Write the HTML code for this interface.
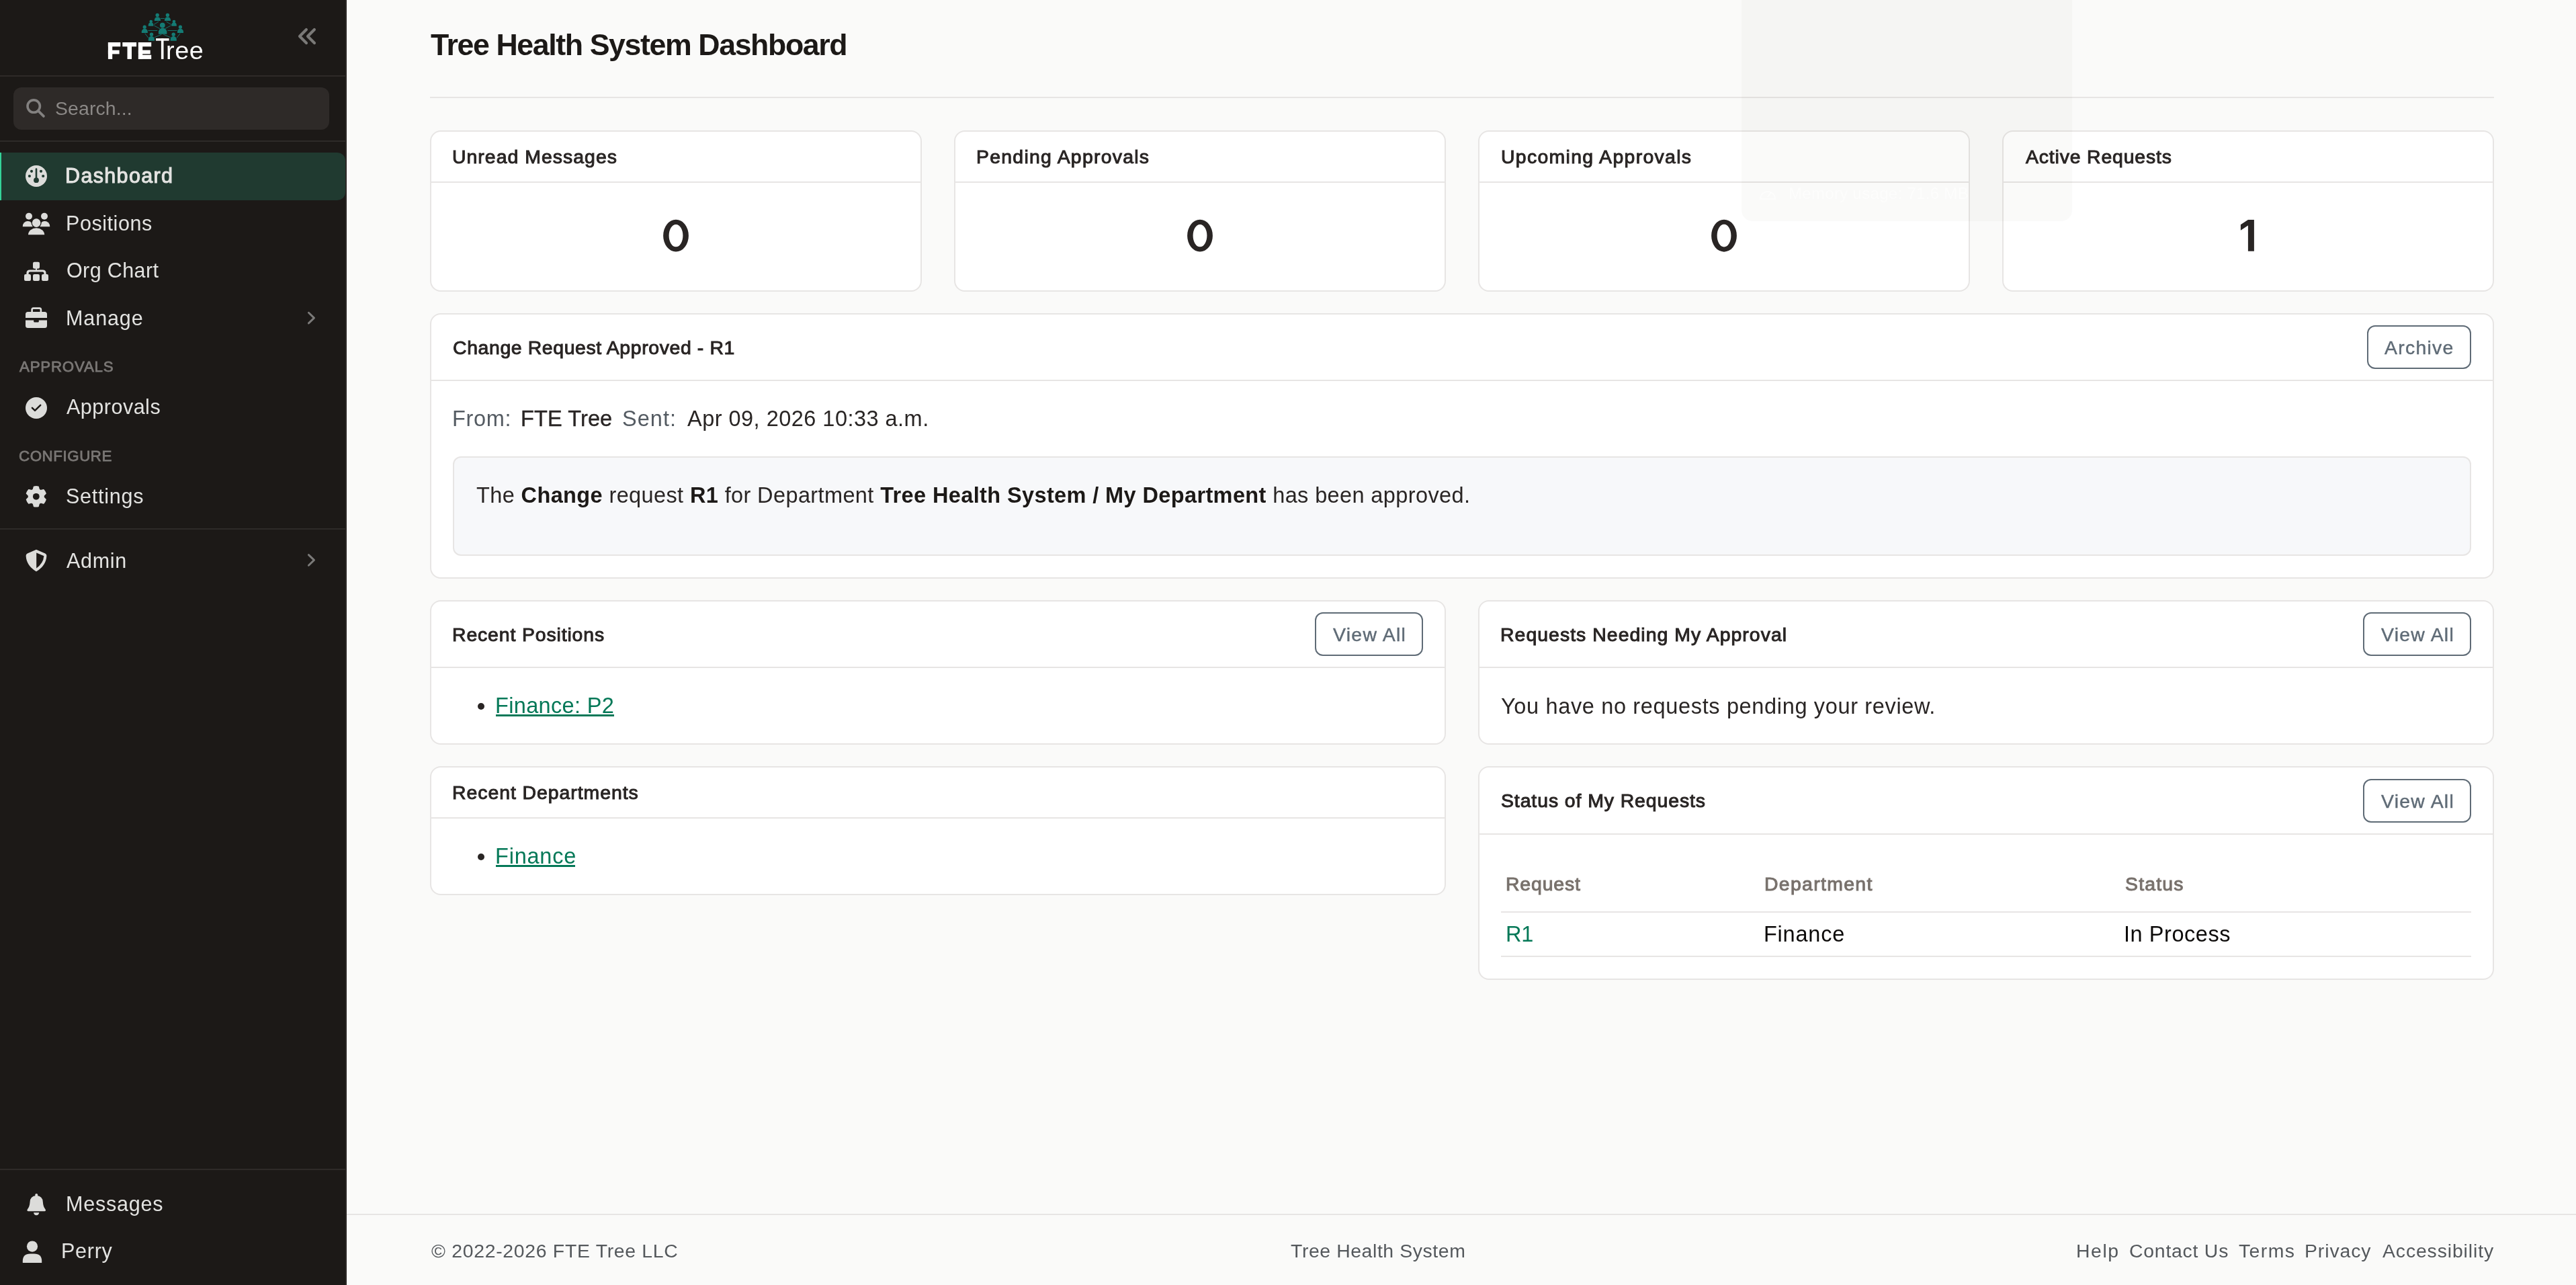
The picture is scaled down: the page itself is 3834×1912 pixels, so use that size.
<!DOCTYPE html>
<html><head><meta charset="utf-8"><title>Tree Health System Dashboard</title>
<style>
html,body{margin:0;padding:0;width:3834px;height:1912px;overflow:hidden;background:#fafaf9;font-family:"Liberation Sans",sans-serif}
body div{white-space:pre;line-height:normal}
.tx{will-change:transform}
b{font-weight:700;color:#1c1917}
</style>
<script>(function(){try{var s=window.innerWidth/3834;if(s>0&&Math.abs(s-1)>0.02){document.documentElement.style.zoom=s;}}catch(e){}})();</script>
</head><body>
<div style="position:absolute;left:0px;top:0px;width:514px;height:1912px;background:#1c1917"></div><div style="position:absolute;left:514px;top:0px;width:2px;height:1912px;background:#2c2826"></div><div style="position:absolute;left:0px;top:112px;width:514px;height:2px;background:#2e2a28"></div><div style="position:absolute;left:20px;top:130px;width:470px;height:63px;background:#2e2a28;border-radius:12px"></div><div style="position:absolute;left:0px;top:209px;width:514px;height:2px;background:#2e2a28"></div><div style="position:absolute;left:0px;top:227px;width:514px;height:71px;background:#203a30;border-radius:0 12px 12px 0"></div><div style="position:absolute;left:0px;top:227px;width:2px;height:71px;background:#34d399"></div><div style="position:absolute;left:0px;top:786px;width:514px;height:2px;background:#2e2a28"></div><div style="position:absolute;left:0px;top:1739px;width:514px;height:2px;background:#2e2a28"></div><svg style="position:absolute;left:0;top:0" width="516" height="1912"><circle cx="50.2" cy="158.1" r="9.2" fill="none" stroke="#838180" stroke-width="3.6"/><line x1="57.6" y1="165.6" x2="64.9" y2="172.9" stroke="#838180" stroke-width="3.8" stroke-linecap="round"/><polyline points="455.9,43.9 446.0,53.9 456.0,63.9" fill="none" stroke="#7a7977" stroke-width="4.2" stroke-linecap="round" stroke-linejoin="round"/><polyline points="467.9,43.9 458.0,53.9 468.0,63.9" fill="none" stroke="#7a7977" stroke-width="4.2" stroke-linecap="round" stroke-linejoin="round"/><circle cx="54" cy="262" r="16" fill="#dcdcda"/><circle cx="47" cy="254.8" r="2.1" fill="#203a30"/><circle cx="61" cy="254.8" r="2.1" fill="#203a30"/><circle cx="43.9" cy="262" r="2.1" fill="#203a30"/><circle cx="64.2" cy="262" r="2.1" fill="#203a30"/><rect x="52.7" y="250.2" width="2.6" height="16" rx="1.3" fill="#203a30"/><circle cx="54" cy="268.2" r="3.9" fill="#203a30"/><circle cx="43" cy="321.8" r="5.0" fill="#dcdcda"/><path d="M33.8,337.3 L33.8,336.6 A7.600000000000001,7.600000000000001 0 0 1 49,336.6 L49,337.3 Z" fill="#dcdcda"/><circle cx="66" cy="321.8" r="5.0" fill="#dcdcda"/><path d="M59,337.3 L59,336.6 A7.600000000000001,7.600000000000001 0 0 1 74.2,336.6 L74.2,337.3 Z" fill="#dcdcda"/><circle cx="54.1" cy="331.6" r="7.6" fill="#1c1917"/><path d="M40.6,350.5 L40.6,346 A13.4,9.5 0 0 1 67.4,346 L67.4,350.5 Z" fill="#1c1917"/><circle cx="54.1" cy="331.6" r="6.3" fill="#dcdcda"/><path d="M42,349.2 L42,349.2 A12.100000000000001,10.0 0 0 1 66.2,349.2 L66.2,349.2 Z" fill="#dcdcda"/><rect x="49" y="389.8" width="10" height="10" rx="2.2" fill="#dcdcda"/><rect x="53" y="398" width="2" height="6" fill="#dcdcda"/><path d="M41,409 L41,406.5 Q41,403 44.5,403 L63.5,403 Q67,403 67,406.5 L67,409" fill="none" stroke="#dcdcda" stroke-width="3.2"/><rect x="36" y="408" width="10" height="10" rx="2.2" fill="#dcdcda"/><rect x="49" y="408" width="10" height="10" rx="2.2" fill="#dcdcda"/><rect x="62" y="408" width="10" height="10" rx="2.2" fill="#dcdcda"/><path d="M47.6,465 L47.6,460.8 Q47.6,458.6 49.8,458.6 L58.7,458.6 Q60.9,458.6 60.9,460.8 L60.9,465" fill="none" stroke="#dcdcda" stroke-width="2.6"/><path d="M38,473 L38,467.5 Q38,464 41.5,464 L66.5,464 Q70,464 70,467.5 L70,473 Z" fill="#dcdcda"/><path d="M38,476.5 L70,476.5 L70,484.5 Q70,488 66.5,488 L41.5,488 Q38,488 38,484.5 Z" fill="#dcdcda"/><rect x="50.2" y="475" width="7.6" height="4.4" rx="0.8" fill="#1c1917"/><circle cx="54" cy="607" r="16" fill="#dcdcda"/><polyline points="47.9,606.9 52.0,610.9 60.2,602.8" fill="none" stroke="#1c1917" stroke-width="2.5" stroke-linecap="round" stroke-linejoin="round"/><path d="M49.44,728.48 L50.62,724.24 A14.9,14.9 0 0 1 56.98,724.24 L58.16,728.48 A11.2,11.2 0 0 1 60.55,729.86 L64.82,728.77 A14.9,14.9 0 0 1 68.00,734.27 L64.91,737.42 A11.2,11.2 0 0 1 64.91,740.18 L68.00,743.33 A14.9,14.9 0 0 1 64.82,748.83 L60.55,747.74 A11.2,11.2 0 0 1 58.16,749.12 L56.98,753.36 A14.9,14.9 0 0 1 50.62,753.36 L49.44,749.12 A11.2,11.2 0 0 1 47.05,747.74 L42.78,748.83 A14.9,14.9 0 0 1 39.60,743.33 L42.69,740.18 A11.2,11.2 0 0 1 42.69,737.42 L39.60,734.27 A14.9,14.9 0 0 1 42.78,728.77 L47.05,729.86 A11.2,11.2 0 0 1 49.44,728.48 Z" fill="#dcdcda" stroke="#dcdcda" stroke-width="1.7" stroke-linejoin="round"/><circle cx="53.8" cy="738.8" r="4.9" fill="#1c1917"/><path d="M54,817.8 L67.2,823.4 Q69.6,824.4 69.4,827 Q68.6,841.5 54.6,850 Q54,850.4 53.4,850 Q39.4,841.5 38.6,827 Q38.4,824.4 40.8,823.4 Z" fill="#dcdcda"/><path d="M54.2,822.6 L65.4,827.3 Q64.4,838.4 54.2,845.4 Z" fill="#1c1917"/><path d="M52.3,1780.5 L52.3,1777.8 Q52.3,1775.9 54.25,1775.9 Q56.2,1775.9 56.2,1777.8 L56.2,1780.5 Z" fill="#dcdcda"/><path d="M54.2,1779.1 Q63.6,1779.4 63.9,1789 Q64.2,1795.2 67.6,1799.6 Q68.8,1802.3 66.3,1802.3 L42.1,1802.3 Q39.6,1802.3 40.8,1799.6 Q44.2,1795.2 44.5,1789 Q44.8,1779.4 54.2,1779.1 Z" fill="#dcdcda"/><path d="M50.0,1804.3 L58.3,1804.3 Q57.6,1808.3 54.15,1808.3 Q50.7,1808.3 50.0,1804.3 Z" fill="#dcdcda"/><circle cx="48" cy="1854.6" r="8.1" fill="#dcdcda"/><path d="M33.8,1879 L33.8,1876.5 Q33.8,1865.6 45,1865.6 L51,1865.6 Q62.2,1865.6 62.2,1876.5 L62.2,1879 Z" fill="#dcdcda"/><polyline points="459.4,465.3 467.5,473.1 459.4,480.9" fill="none" stroke="#7b7a79" stroke-width="2.9" stroke-linecap="round" stroke-linejoin="round"/><polyline points="459.4,825.6 467.5,833.4 459.4,841.2" fill="none" stroke="#7b7a79" stroke-width="2.9" stroke-linecap="round" stroke-linejoin="round"/></svg><svg style="position:absolute;left:0;top:0" width="516" height="120"><line x1="239.0" y1="27.5" x2="244.9" y2="27.5" stroke="#147b74" stroke-width="0.9"/><line x1="229.0" y1="36.5" x2="236.0" y2="32.2" stroke="#147b74" stroke-width="0.9"/><line x1="254.6" y1="36.5" x2="247.6" y2="32.2" stroke="#147b74" stroke-width="0.9"/><line x1="229.4" y1="38.1" x2="238.0" y2="42.7" stroke="#147b74" stroke-width="0.9"/><line x1="254.2" y1="38.1" x2="245.6" y2="42.7" stroke="#147b74" stroke-width="0.9"/><line x1="220.4" y1="45.5" x2="234.3" y2="45.5" stroke="#147b74" stroke-width="0.9"/><line x1="249.5" y1="45.5" x2="263.4" y2="45.5" stroke="#147b74" stroke-width="0.9"/><line x1="240.3" y1="51.3" x2="230.0" y2="55.6" stroke="#147b74" stroke-width="0.9"/><line x1="243.3" y1="51.3" x2="253.6" y2="55.6" stroke="#147b74" stroke-width="0.9"/><line x1="215.8" y1="49.7" x2="220.8" y2="56.3" stroke="#147b74" stroke-width="0.9"/><line x1="268.1" y1="49.7" x2="263.1" y2="56.3" stroke="#147b74" stroke-width="0.9"/><circle cx="241.8" cy="37.6" r="3.9" fill="#147b74"/><path d="M235.9,50.8 L235.9,47.85 A6.25,6.25 0 0 1 248.4,47.85 L248.4,50.8 Z" fill="#147b74"/><circle cx="234.2" cy="22.4" r="2.7" fill="#147b74"/><path d="M229.9,31.1 L229.9,29.7 A4.5,4.5 0 0 1 238.9,29.7 L238.9,31.1 Z" fill="#147b74"/><circle cx="249.4" cy="22.4" r="2.7" fill="#147b74"/><path d="M245.0,31.1 L245.0,29.7 A4.5,4.5 0 0 1 254.0,29.7 L254.0,31.1 Z" fill="#147b74"/><circle cx="224.7" cy="32.0" r="2.3" fill="#147b74"/><path d="M220.8,38.8 L220.8,37.4 A3.799999999999997,3.799999999999997 0 0 1 228.4,37.4 L228.4,38.8 Z" fill="#147b74"/><circle cx="259.0" cy="32.0" r="2.3" fill="#147b74"/><path d="M255.2,38.8 L255.2,37.40000000000001 A3.8000000000000114,3.8000000000000114 0 0 1 262.8,37.40000000000001 L262.8,38.8 Z" fill="#147b74"/><circle cx="215.2" cy="40.2" r="2.6" fill="#147b74"/><path d="M210.8,49.1 L210.8,47.3 A4.5,4.5 0 0 1 219.8,47.3 L219.8,49.1 Z" fill="#147b74"/><circle cx="268.4" cy="40.2" r="2.6" fill="#147b74"/><path d="M264.0,49.1 L264.0,47.3 A4.5,4.5 0 0 1 273.0,47.3 L273.0,49.1 Z" fill="#147b74"/><circle cx="225.5" cy="51.2" r="2.7" fill="#147b74"/><path d="M220.8,60.8 L220.8,58.599999999999994 A4.599999999999994,4.599999999999994 0 0 1 230.0,58.599999999999994 L230.0,60.8 Z" fill="#147b74"/><circle cx="258.2" cy="51.2" r="2.7" fill="#147b74"/><path d="M253.6,60.8 L253.6,58.60000000000001 A4.6000000000000085,4.6000000000000085 0 0 1 262.8,58.60000000000001 L262.8,60.8 Z" fill="#147b74"/><rect x="160.9" y="63.0" width="6.30" height="24.90" fill="#ffffff"/><rect x="160.9" y="63.0" width="18.40" height="6.30" fill="#ffffff"/><rect x="160.9" y="74.7" width="16.70" height="5.70" fill="#ffffff"/><rect x="182.3" y="63.0" width="20.80" height="6.30" fill="#ffffff"/><rect x="189.5" y="63.0" width="6.50" height="24.90" fill="#ffffff"/><rect x="205.9" y="63.0" width="6.30" height="24.90" fill="#ffffff"/><rect x="205.9" y="63.0" width="19.30" height="6.30" fill="#ffffff"/><rect x="205.9" y="74.6" width="17.80" height="5.70" fill="#ffffff"/><rect x="205.9" y="81.7" width="19.30" height="6.20" fill="#ffffff"/><rect x="232.0" y="57.1" width="19.60" height="3.50" fill="#ffffff"/><rect x="239.9" y="57.1" width="3.60" height="30.80" fill="#ffffff"/></svg><div style="position:absolute;left:516px;top:0px;width:3318px;height:1912px;background:#fafaf9"></div><div style="position:absolute;left:640px;top:144px;width:3072px;height:2px;background:#e7e5e4"></div><div style="position:absolute;left:640px;top:194px;width:732px;height:240px;background:#fff;border:2px solid #e7e5e4;border-radius:16px;box-sizing:border-box"></div><div style="position:absolute;left:642px;top:270px;width:728px;height:2px;background:#e7e5e4"></div><svg style="position:absolute;left:0;top:0" width="3834" height="440"><path fill-rule="evenodd" fill="#292524" d="M987.1,350.7 A18.9,23.9 0 1 0 1024.9,350.7 A18.9,23.9 0 1 0 987.1,350.7 Z M995.6,350.6 A10.4,16.7 0 1 0 1016.4,350.6 A10.4,16.7 0 1 0 995.6,350.6 Z"/></svg><div style="position:absolute;left:1420px;top:194px;width:732px;height:240px;background:#fff;border:2px solid #e7e5e4;border-radius:16px;box-sizing:border-box"></div><div style="position:absolute;left:1422px;top:270px;width:728px;height:2px;background:#e7e5e4"></div><svg style="position:absolute;left:0;top:0" width="3834" height="440"><path fill-rule="evenodd" fill="#292524" d="M1767.1,350.7 A18.9,23.9 0 1 0 1804.9,350.7 A18.9,23.9 0 1 0 1767.1,350.7 Z M1775.6,350.6 A10.4,16.7 0 1 0 1796.4,350.6 A10.4,16.7 0 1 0 1775.6,350.6 Z"/></svg><div style="position:absolute;left:2200px;top:194px;width:732px;height:240px;background:#fff;border:2px solid #e7e5e4;border-radius:16px;box-sizing:border-box"></div><div style="position:absolute;left:2202px;top:270px;width:728px;height:2px;background:#e7e5e4"></div><svg style="position:absolute;left:0;top:0" width="3834" height="440"><path fill-rule="evenodd" fill="#292524" d="M2547.1,350.7 A18.9,23.9 0 1 0 2584.9,350.7 A18.9,23.9 0 1 0 2547.1,350.7 Z M2555.6,350.6 A10.4,16.7 0 1 0 2576.4,350.6 A10.4,16.7 0 1 0 2555.6,350.6 Z"/></svg><div style="position:absolute;left:2980px;top:194px;width:732px;height:240px;background:#fff;border:2px solid #e7e5e4;border-radius:16px;box-sizing:border-box"></div><div style="position:absolute;left:2982px;top:270px;width:728px;height:2px;background:#e7e5e4"></div><svg style="position:absolute;left:0;top:0" width="3834" height="440"><path fill="#292524" d="M3334.9,334.3 L3345.9,327.1 L3354.9,327.1 L3354.9,373.8 L3345.9,373.8 L3345.9,335.5 L3334.9,342.7 Z"/></svg><div style="position:absolute;left:640px;top:466px;width:3072px;height:395px;background:#fff;border:2px solid #e7e5e4;border-radius:16px;box-sizing:border-box"></div><div style="position:absolute;left:642px;top:565px;width:3068px;height:2px;background:#e7e5e4"></div><div style="position:absolute;left:3523px;top:484px;width:155px;height:65px;border:2px solid #5f6b76;border-radius:12px;box-sizing:border-box"></div><div style="position:absolute;left:674px;top:679px;width:3004px;height:148px;background:#f7f8fa;border:2px solid #e7e5e4;border-radius:12px;box-sizing:border-box"></div><div style="position:absolute;left:640px;top:893px;width:1512px;height:215px;background:#fff;border:2px solid #e7e5e4;border-radius:16px;box-sizing:border-box"></div><div style="position:absolute;left:642px;top:992px;width:1508px;height:2px;background:#e7e5e4"></div><div style="position:absolute;left:1957px;top:911px;width:161px;height:65px;border:2px solid #5f6b76;border-radius:12px;box-sizing:border-box"></div><div style="position:absolute;left:711px;top:1046px;width:10px;height:10px;border-radius:50%;background:#292524"></div><div style="position:absolute;left:738px;top:1063px;width:176px;height:3px;background:#047857"></div><div style="position:absolute;left:640px;top:1140px;width:1512px;height:192px;background:#fff;border:2px solid #e7e5e4;border-radius:16px;box-sizing:border-box"></div><div style="position:absolute;left:642px;top:1216px;width:1508px;height:2px;background:#e7e5e4"></div><div style="position:absolute;left:711px;top:1270px;width:10px;height:10px;border-radius:50%;background:#292524"></div><div style="position:absolute;left:738px;top:1287px;width:118px;height:3px;background:#047857"></div><div style="position:absolute;left:2200px;top:893px;width:1512px;height:215px;background:#fff;border:2px solid #e7e5e4;border-radius:16px;box-sizing:border-box"></div><div style="position:absolute;left:2202px;top:992px;width:1508px;height:2px;background:#e7e5e4"></div><div style="position:absolute;left:3517px;top:911px;width:161px;height:65px;border:2px solid #5f6b76;border-radius:12px;box-sizing:border-box"></div><div style="position:absolute;left:2200px;top:1140px;width:1512px;height:318px;background:#fff;border:2px solid #e7e5e4;border-radius:16px;box-sizing:border-box"></div><div style="position:absolute;left:2202px;top:1240px;width:1508px;height:2px;background:#e7e5e4"></div><div style="position:absolute;left:3517px;top:1159px;width:161px;height:65px;border:2px solid #5f6b76;border-radius:12px;box-sizing:border-box"></div><div style="position:absolute;left:2234px;top:1356px;width:1444px;height:2px;background:#e7e5e4"></div><div style="position:absolute;left:2234px;top:1422px;width:1444px;height:2px;background:#e7e5e4"></div><div style="position:absolute;left:516px;top:1806px;width:3318px;height:2px;background:#e7e5e4"></div><div style="position:absolute;left:2592px;top:-20px;width:492px;height:349px;background:rgba(40,30,20,0.025);border-radius:16px"></div><svg style="position:absolute;left:2615px;top:272px" width="32" height="30"><path d="M5,24 A11,11 0 1 1 27,24 Z" fill="none" stroke="rgba(255,255,255,0.55)" stroke-width="2.2"/><line x1="16" y1="21" x2="21" y2="14" stroke="rgba(255,255,255,0.55)" stroke-width="2.2"/></svg>
<div class="tx" style="position:absolute;left:247.00px;top:53.90px;font-size:37.8px;font-weight:400;letter-spacing:0.600px;color:#ffffff;">ree</div><div class="tx" style="position:absolute;left:82.00px;top:144.50px;font-size:28.4px;font-weight:400;letter-spacing:0.125px;color:#8b8886;">Search...</div><div class="tx" style="position:absolute;left:96.60px;top:244.00px;font-size:30.5px;font-weight:400;letter-spacing:1.350px;color:#e3e3e1;-webkit-text-stroke:1.05px #e3e3e1">Dashboard</div><div class="tx" style="position:absolute;left:97.60px;top:315.40px;font-size:30.5px;font-weight:400;letter-spacing:0.550px;color:#e3e3e1;">Positions</div><div class="tx" style="position:absolute;left:98.60px;top:385.20px;font-size:30.5px;font-weight:400;letter-spacing:0.375px;color:#e3e3e1;">Org Chart</div><div class="tx" style="position:absolute;left:97.60px;top:456.30px;font-size:30.5px;font-weight:400;letter-spacing:0.880px;color:#e3e3e1;">Manage</div><div class="tx" style="position:absolute;left:28.80px;top:533.20px;font-size:22.3px;font-weight:400;letter-spacing:0.775px;color:#7a7775;-webkit-text-stroke:0.8px #7a7775">APPROVALS</div><div class="tx" style="position:absolute;left:99.00px;top:588.20px;font-size:30.5px;font-weight:400;letter-spacing:0.500px;color:#e3e3e1;">Approvals</div><div class="tx" style="position:absolute;left:27.80px;top:666.30px;font-size:22.3px;font-weight:400;letter-spacing:0.575px;color:#7a7775;-webkit-text-stroke:0.8px #7a7775">CONFIGURE</div><div class="tx" style="position:absolute;left:97.60px;top:721.20px;font-size:30.5px;font-weight:400;letter-spacing:0.743px;color:#e3e3e1;">Settings</div><div class="tx" style="position:absolute;left:99.00px;top:816.50px;font-size:30.5px;font-weight:400;letter-spacing:0.675px;color:#e3e3e1;">Admin</div><div class="tx" style="position:absolute;left:97.60px;top:1774.00px;font-size:30.5px;font-weight:400;letter-spacing:0.800px;color:#e3e3e1;">Messages</div><div class="tx" style="position:absolute;left:91.40px;top:1844.20px;font-size:30.5px;font-weight:400;letter-spacing:0.725px;color:#e3e3e1;">Perry</div><div class="tx" style="position:absolute;left:641.30px;top:42.00px;font-size:44.7px;font-weight:700;letter-spacing:-1.391px;color:#1c1917;">Tree Health System Dashboard</div><div class="tx" style="position:absolute;left:673.10px;top:217.30px;font-size:28.4px;font-weight:400;letter-spacing:1.036px;color:#292524;-webkit-text-stroke:1.0px #292524">Unread Messages</div><div class="tx" style="position:absolute;left:1452.70px;top:217.30px;font-size:28.4px;font-weight:400;letter-spacing:1.269px;color:#292524;-webkit-text-stroke:1.0px #292524">Pending Approvals</div><div class="tx" style="position:absolute;left:2233.60px;top:217.30px;font-size:28.4px;font-weight:400;letter-spacing:1.332px;color:#292524;-webkit-text-stroke:1.0px #292524">Upcoming Approvals</div><div class="tx" style="position:absolute;left:3015.00px;top:217.30px;font-size:28.4px;font-weight:400;letter-spacing:0.843px;color:#292524;-webkit-text-stroke:1.0px #292524">Active Requests</div><div class="tx" style="position:absolute;left:674.10px;top:501.40px;font-size:28.4px;font-weight:400;letter-spacing:0.626px;color:#292524;-webkit-text-stroke:1.0px #292524">Change Request Approved - R1</div><div class="tx" style="position:absolute;left:3549.40px;top:501.00px;font-size:28.4px;font-weight:400;letter-spacing:1.267px;color:#5f6b76;-webkit-text-stroke:0.45px #5f6b76">Archive</div><div class="tx" style="position:absolute;left:673.40px;top:605.00px;font-size:32.5px;font-weight:400;letter-spacing:0.650px;color:#545b62;">From:</div><div class="tx" style="position:absolute;left:775.00px;top:605.00px;font-size:32.5px;font-weight:400;letter-spacing:0.100px;color:#292524;-webkit-text-stroke:0.4px #292524">FTE Tree</div><div class="tx" style="position:absolute;left:925.50px;top:605.00px;font-size:32.5px;font-weight:400;letter-spacing:1.025px;color:#545b62;">Sent:</div><div class="tx" style="position:absolute;left:1022.50px;top:605.00px;font-size:32.5px;font-weight:400;letter-spacing:0.477px;color:#292524;">Apr 09, 2026 10:33 a.m.</div><div class="tx" style="position:absolute;left:708.60px;top:719.10px;font-size:32.5px;font-weight:400;letter-spacing:0.380px;color:#292524;">The <b>Change</b> request <b>R1</b> for Department <b>Tree Health System / My Department</b> has been approved.</div><div class="tx" style="position:absolute;left:673.10px;top:928.20px;font-size:28.4px;font-weight:400;letter-spacing:0.873px;color:#292524;-webkit-text-stroke:1.0px #292524">Recent Positions</div><div class="tx" style="position:absolute;left:1984.00px;top:927.90px;font-size:28.4px;font-weight:400;letter-spacing:1.286px;color:#5f6b76;-webkit-text-stroke:0.45px #5f6b76">View All</div><div class="tx" style="position:absolute;left:736.60px;top:1032.20px;font-size:32.5px;font-weight:400;letter-spacing:0.340px;color:#047857;">Finance: P2</div><div class="tx" style="position:absolute;left:673.40px;top:1163.30px;font-size:28.4px;font-weight:400;letter-spacing:0.965px;color:#292524;-webkit-text-stroke:1.0px #292524">Recent Departments</div><div class="tx" style="position:absolute;left:736.50px;top:1256.10px;font-size:32.5px;font-weight:400;letter-spacing:0.783px;color:#047857;">Finance</div><div class="tx" style="position:absolute;left:2233.10px;top:928.20px;font-size:28.4px;font-weight:400;letter-spacing:1.052px;color:#292524;-webkit-text-stroke:1.0px #292524">Requests Needing My Approval</div><div class="tx" style="position:absolute;left:3544.00px;top:927.90px;font-size:28.4px;font-weight:400;letter-spacing:1.257px;color:#5f6b76;-webkit-text-stroke:0.45px #5f6b76">View All</div><div class="tx" style="position:absolute;left:2233.50px;top:1032.70px;font-size:32.5px;font-weight:400;letter-spacing:0.650px;color:#292524;">You have no requests pending your review.</div><div class="tx" style="position:absolute;left:2234.00px;top:1175.20px;font-size:28.4px;font-weight:400;letter-spacing:0.920px;color:#292524;-webkit-text-stroke:1.0px #292524">Status of My Requests</div><div class="tx" style="position:absolute;left:3544.00px;top:1175.50px;font-size:28.4px;font-weight:400;letter-spacing:1.257px;color:#5f6b76;-webkit-text-stroke:0.45px #5f6b76">View All</div><div class="tx" style="position:absolute;left:2241.20px;top:1299.00px;font-size:28.4px;font-weight:400;letter-spacing:0.850px;color:#78716c;-webkit-text-stroke:1.0px #78716c">Request</div><div class="tx" style="position:absolute;left:2626.00px;top:1299.00px;font-size:28.4px;font-weight:400;letter-spacing:1.333px;color:#78716c;-webkit-text-stroke:1.0px #78716c">Department</div><div class="tx" style="position:absolute;left:3163.00px;top:1299.00px;font-size:28.4px;font-weight:400;letter-spacing:1.200px;color:#78716c;-webkit-text-stroke:1.0px #78716c">Status</div><div class="tx" style="position:absolute;left:2240.90px;top:1372.00px;font-size:32.5px;font-weight:400;letter-spacing:-0.100px;color:#047857;">R1</div><div class="tx" style="position:absolute;left:2625.00px;top:1372.30px;font-size:32.5px;font-weight:400;letter-spacing:0.767px;color:#0c0a09;">Finance</div><div class="tx" style="position:absolute;left:3161.00px;top:1372.30px;font-size:32.5px;font-weight:400;letter-spacing:0.556px;color:#0c0a09;">In Process</div><div class="tx" style="position:absolute;left:641.90px;top:1845.00px;font-size:28.4px;font-weight:400;letter-spacing:0.700px;color:#54585c;">© 2022-2026 FTE Tree LLC</div><div class="tx" style="position:absolute;left:1921.00px;top:1845.00px;font-size:28.4px;font-weight:400;letter-spacing:0.588px;color:#54585c;">Tree Health System</div><div class="tx" style="position:absolute;left:3090.00px;top:1845.00px;font-size:28.4px;font-weight:400;letter-spacing:1.567px;color:#54585c;">Help</div><div class="tx" style="position:absolute;left:3168.60px;top:1845.00px;font-size:28.4px;font-weight:400;letter-spacing:0.767px;color:#54585c;">Contact Us</div><div class="tx" style="position:absolute;left:3332.00px;top:1845.00px;font-size:28.4px;font-weight:400;letter-spacing:1.425px;color:#54585c;">Terms</div><div class="tx" style="position:absolute;left:3429.60px;top:1845.00px;font-size:28.4px;font-weight:400;letter-spacing:0.900px;color:#54585c;">Privacy</div><div class="tx" style="position:absolute;left:3546.00px;top:1845.00px;font-size:28.4px;font-weight:400;letter-spacing:0.875px;color:#54585c;">Accessibility</div><div class="tx" style="position:absolute;left:2661.80px;top:274.30px;font-size:24px;font-weight:400;letter-spacing:0.310px;color:rgba(255,255,255,0.55);">Memory usage: 71.6 MB</div>
</body></html>
